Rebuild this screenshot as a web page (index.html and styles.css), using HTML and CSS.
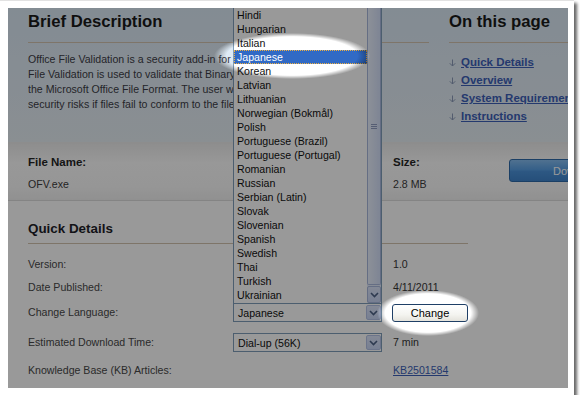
FILE: index.html
```html
<!DOCTYPE html>
<html>
<head>
<meta charset="utf-8">
<link rel="stylesheet" href="styles.css">
</head>
<body>
<div class="frame">
  <div class="shot">
    <div class="page">
      <section class="top">
        <div class="brief">
          <h2 class="h-big">Brief Description</h2>
          <div class="desc">
            <span>Office File Validation is a security add-in for Office 2003 and Office 2007. Office</span>
            <span>File Validation is used to validate that Binary file formats conform to</span>
            <span>the Microsoft Office File Format. The user will be warned about potential</span>
            <span>security risks if files fail to conform to the file format.</span>
          </div>
        </div>
        <div class="onpage">
          <h2 class="h-big">On this page</h2>
          <ul class="toc">
            <li><svg class="arr" viewBox="0 0 7 8" width="7" height="8"><path d="M3.5 0.5V7M0.8 4.3L3.5 7L6.2 4.3"/></svg><a href="#">Quick Details</a></li>
            <li><svg class="arr" viewBox="0 0 7 8" width="7" height="8"><path d="M3.5 0.5V7M0.8 4.3L3.5 7L6.2 4.3"/></svg><a href="#">Overview</a></li>
            <li><svg class="arr" viewBox="0 0 7 8" width="7" height="8"><path d="M3.5 0.5V7M0.8 4.3L3.5 7L6.2 4.3"/></svg><a href="#">System Requirements</a></li>
            <li><svg class="arr" viewBox="0 0 7 8" width="7" height="8"><path d="M3.5 0.5V7M0.8 4.3L3.5 7L6.2 4.3"/></svg><a href="#">Instructions</a></li>
          </ul>
        </div>
      </section>

      <section class="file">
        <div class="fcol fname">
          <div class="flabel">File Name:</div>
          <div class="fval">OFV.exe</div>
        </div>
        <div class="fcol">
          <div class="flabel">Size:</div>
          <div class="fval">2.8 MB</div>
        </div>
        <div class="fcol">
          <button class="dl">Download</button>
        </div>
      </section>

      <section class="details">
        <h3 class="h-mid">Quick Details</h3>
        <div class="grid">
          <div class="lbl">Version:</div><div></div><div class="val">1.0</div>
          <div class="lbl">Date Published:</div><div></div><div class="val">4/11/2011</div>
          <div class="lbl">Change Language:</div>
          <div><div class="sel"><span>Japanese</span><span class="sbtn"><svg viewBox="0 0 9 6" width="9" height="6"><path d="M1 1L4.5 4.5L8 1"/></svg></span></div></div>
          <div><button class="chg">Change</button></div>
          <div class="lbl">Estimated Download Time:</div>
          <div><div class="sel"><span>Dial-up (56K)</span><span class="sbtn"><svg viewBox="0 0 9 6" width="9" height="6"><path d="M1 1L4.5 4.5L8 1"/></svg></span></div></div>
          <div class="val">7 min</div>
          <div class="lbl">Knowledge Base (KB) Articles:</div><div></div><div class="val"><a class="kb" href="#">KB2501584</a></div>
        </div>
      </section>
    </div>

    <div class="dropdown">
      <ul class="opts">
        <li>Hindi</li>
        <li>Hungarian</li>
        <li>Italian</li>
        <li class="on">Japanese</li>
        <li>Korean</li>
        <li>Latvian</li>
        <li>Lithuanian</li>
        <li>Norwegian (Bokmål)</li>
        <li>Polish</li>
        <li>Portuguese (Brazil)</li>
        <li>Portuguese (Portugal)</li>
        <li>Romanian</li>
        <li>Russian</li>
        <li>Serbian (Latin)</li>
        <li>Slovak</li>
        <li>Slovenian</li>
        <li>Spanish</li>
        <li>Swedish</li>
        <li>Thai</li>
        <li>Turkish</li>
        <li>Ukrainian</li>
      </ul>
      <div class="sbar">
        <div class="thumb"><svg class="grip" viewBox="0 0 6 5" width="6" height="5"><path d="M0 0.5H6M0 2.5H6M0 4.5H6"/></svg></div>
        <div class="sdown"><svg viewBox="0 0 9 6" width="9" height="6"><path d="M1 1L4.5 4.5L8 1"/></svg></div>
      </div>
    </div>

    <div class="dim"></div>
  </div>
</div>
</body>
</html>
```

FILE: styles.css
```css
* {
  box-sizing: border-box;
  margin: 0;
  padding: 0;
}

body {
  margin: 0;
  background: #fff;
  font-family: "Liberation Sans", Arial, sans-serif;
}

.frame {
  width: 574px;
  height: 395px;
  padding: 7px 6px 7px 8px;
  border-top: 1px solid #e2e2e2;
  background: #fff;
  box-shadow: 3px 3px 3px rgba(0, 0, 0, 0.6);
}

.shot {
  position: relative;
  width: 560px;
  height: 380px;
  overflow: hidden;
  background: #fff;
}

.page {
  width: 560px;
}

/* header */
.top {
  display: grid;
  grid-template-columns: 421px 1fr;
  column-gap: 20px;
  height: 134px;
  background: linear-gradient(#dbe9f6, #e6eef4);
}

.brief {
  padding-left: 20px;
}

.h-big {
  font-size: 16.7px;
  font-weight: bold;
  line-height: 20px;
  color: #1a1a1a;
  padding-top: 4px;
  padding-bottom: 10px;
  border-bottom: 1px solid #d2c4b0;
  white-space: nowrap;
}

.desc {
  margin-top: 9px;
  width: 354px;
  overflow: hidden;
  font-size: 10.6px;
  line-height: 15px;
  color: #3c3c46;
}

.desc span {
  display: block;
  white-space: nowrap;
}

.toc {
  list-style: none;
  margin-top: 10px;
}

.toc li {
  display: flex;
  align-items: center;
  height: 18px;
  white-space: nowrap;
}

.arr {
  flex: none;
  margin-right: 5px;
  margin-top: 1px;
}

.arr path {
  fill: none;
  stroke: #8a9ab8;
  stroke-width: 1;
}

.toc a {
  font-size: 11.5px;
  font-weight: bold;
  color: #3d5fb8;
  text-decoration: underline;
}

/* file band */
.file {
  display: grid;
  grid-template-columns: 385px 116px 1fr;
  height: 59px;
  border-bottom: 1px solid #dcdcdc;
  background: linear-gradient(#ebebeb, #fdfdfd 35%, #fbfbfb 75%, #f1f1f1);
}

.fcol {
  padding-top: 12px;
  white-space: nowrap;
}

.fname {
  padding-left: 20px;
}

.flabel {
  font-size: 11.5px;
  font-weight: bold;
  line-height: 16px;
  color: #262626;
}

.fval {
  margin-top: 6px;
  font-size: 10.6px;
  line-height: 16px;
  color: #3c3c3c;
}

.dl {
  display: block;
  margin-top: 5px;
  width: 141px;
  height: 23px;
  border: 1px solid #2e6aa8;
  border-radius: 3px;
  background: linear-gradient(#86bdf0, #5aa0e4 45%, #4b92da 55%, #3f84cc);
  color: #fff;
  font-family: "Liberation Sans", Arial, sans-serif;
  font-size: 11px;
  text-align: left;
  padding-left: 43px;
}

/* quick details */
.details {
  padding-top: 19px;
}

.h-mid {
  margin-left: 20px;
  width: 440px;
  font-size: 13.4px;
  font-weight: bold;
  line-height: 18px;
  color: #1e1e28;
  padding-bottom: 5px;
  border-bottom: 1px solid #d2c4b0;
}

.grid {
  display: grid;
  grid-template-columns: 225px 160px 1fr;
  grid-template-rows: 24px 22px 29px 31px 24px;
  align-items: center;
  margin-top: 8px;
}

.lbl {
  padding-left: 20px;
  font-size: 10.6px;
  line-height: 15px;
  color: #484848;
  white-space: nowrap;
}

.val {
  font-size: 10.6px;
  line-height: 15px;
  color: #363636;
  white-space: nowrap;
}

.sel {
  display: flex;
  align-items: center;
  justify-content: space-between;
  width: 149px;
  height: 19px;
  border: 1px solid #7f9db9;
  background: #fff;
  padding-left: 4px;
  font-size: 10.6px;
  color: #111;
}

.sbtn {
  display: flex;
  align-items: center;
  justify-content: center;
  width: 15px;
  height: 15px;
  background: linear-gradient(#dce5fa, #c8d5f5);
  border: 1px solid #b4c2e6;
  border-radius: 2px;
}

.sbtn path,
.sdown path {
  fill: none;
  stroke: #4d6185;
  stroke-width: 1.6;
}

.chg {
  display: block;
  margin-left: -1px;
  width: 76px;
  height: 18px;
  border: 1px solid #1f3f66;
  border-radius: 3px;
  background: linear-gradient(#ffffff, #f4f4f0 60%, #e4e3dc);
  font-family: "Liberation Sans", Arial, sans-serif;
  font-size: 11px;
  color: #000;
}

.kb {
  color: #3d5fb8;
  text-decoration: underline;
}

/* open dropdown list */
.dropdown {
  position: absolute;
  left: 225px;
  top: 0;
  width: 149px;
  height: 295px;
  display: flex;
  background: #fff;
  border-left: 1px solid #7f9db9;
  border-right: 1px solid #7f9db9;
}

.opts {
  flex: 1;
  list-style: none;
  font-size: 10.6px;
  color: #111;
}

.opts li {
  height: 14px;
  line-height: 14px;
  padding-left: 3px;
  white-space: nowrap;
}

.opts li.on {
  background: #316ac5;
  color: #fff;
  outline: 1px dotted #f0b040;
  outline-offset: -1px;
}

.sbar {
  width: 14px;
  display: flex;
  flex-direction: column;
  background: #e2eafb;
}

.thumb {
  flex: 1;
  display: flex;
  justify-content: center;
  align-items: flex-start;
  padding-top: 116px;
  border: 1px solid #a9b8dc;
  border-top: none;
  border-radius: 0 0 2px 2px;
  background: linear-gradient(90deg, #eaf1fe, #d3def7);
}

.grip path {
  fill: none;
  stroke: #8e9cc0;
  stroke-width: 1;
}

.sdown {
  display: flex;
  align-items: center;
  justify-content: center;
  height: 17px;
  margin-top: 1px;
  border: 1px solid #a9b8dc;
  border-radius: 2px;
  background: linear-gradient(#dce5fa, #c8d5f5);
}

/* dimming layer with two spotlight holes */
.dim {
  position: absolute;
  inset: 0;
  background: rgba(0, 0, 0, 0.4);
  -webkit-mask-image:
    radial-gradient(78px 23px at 284px 48px, transparent 84%, #000 100%),
    radial-gradient(51px 23px at 420px 305px, transparent 84%, #000 100%);
  -webkit-mask-composite: source-in;
  mask-image:
    radial-gradient(78px 23px at 284px 48px, transparent 84%, #000 100%),
    radial-gradient(51px 23px at 420px 305px, transparent 84%, #000 100%);
  mask-composite: intersect;
}
```
